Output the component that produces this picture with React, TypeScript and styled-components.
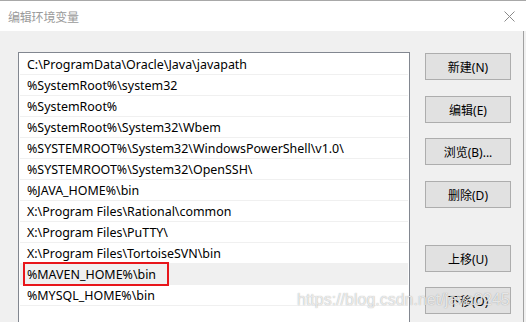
import React from "react";
import styled, { createGlobalStyle } from "styled-components";

const Global = createGlobalStyle`
  html, body { margin: 0; padding: 0; background: #f0f0f0; }
  body { font-family: "Noto Sans", "Noto Sans CJK SC", sans-serif; }
`;

const Window = styled.div`
  position: relative;
  width: 526px;
  height: 322px;
  overflow: hidden;
  display: flex;
  flex-direction: column;
  background: #f0f0f0;
  box-sizing: border-box;
  border-top: 1px solid #a8a8a8;
`;

const TitleBar = styled.div`
  height: 30px;
  background: #ffffff;
  display: flex;
  align-items: center;
  justify-content: space-between;
  padding: 0 11px 0 8px;
  flex-shrink: 0;
`;

const Title = styled.span`
  font-family: "Noto Sans CJK SC", sans-serif;
  font-size: 12px;
  color: #9a9a9a;
  letter-spacing: -0.2px;
`;

const Body = styled.div`
  flex: 1;
  display: flex;
  align-items: flex-start;
  padding: 21px 0 0 18px;
  width: 524px;
  box-sizing: border-box;
  border-right: 1px solid #a0a0a0;
`;

const List = styled.div`
  width: 392px;
  height: 290px;
  box-sizing: border-box;
  border: 1px solid #828790;
  background: #ffffff;
  padding: 1px 1px 0 1px;
  flex-shrink: 0;
`;

const Row = styled.div<{ $selected?: boolean }>`
  position: relative;
  height: 20px;
  border-bottom: 1px solid #f0f0f0;
  background: ${(p) => (p.$selected ? "#f0f0f0" : "transparent")};
  padding-left: 7px;
  display: flex;
  align-items: center;
  font-family: "Noto Sans", "Noto Sans CJK SC", sans-serif;
  font-size: 12.45px;
  color: #000;
  white-space: nowrap;
`;

const Highlight = styled.div`
  position: absolute;
  left: 3px;
  top: -2px;
  width: 146px;
  height: 24px;
  box-sizing: border-box;
  border: 2px solid #e8161b;
  pointer-events: none;
`;

const Buttons = styled.div`
  display: flex;
  flex-direction: column;
  margin-left: 15px;
`;

const Button = styled.button<{ $mt: number }>`
  width: 86px;
  height: 27px;
  margin-top: ${(p) => p.$mt}px;
  box-sizing: border-box;
  border: 1px solid #adadad;
  background: #e1e1e1;
  font-family: "Noto Sans", "Noto Sans CJK SC", sans-serif;
  font-size: 12px;
  color: #000;
  padding: 0;
  display: flex;
  align-items: center;
  justify-content: center;
`;

const Watermark = styled.div`
  position: absolute;
  left: 297px;
  top: 290px;
  font-family: "Liberation Sans", Arial, sans-serif;
  font-size: 16px;
  color: rgba(255, 255, 255, 0.75);
  text-shadow: 0 0 1px rgba(90, 90, 90, 0.6);
  pointer-events: none;
  white-space: nowrap;
`;

const CloseIcon = () => (
  <svg width="11" height="11" viewBox="0 0 11 11">
    <path d="M0.5 0.5 L10.5 10.5 M10.5 0.5 L0.5 10.5" stroke="#8a8a8a" strokeWidth="1" />
  </svg>
);

const paths = [
  "C:\\ProgramData\\Oracle\\Java\\javapath",
  "%SystemRoot%\\system32",
  "%SystemRoot%",
  "%SystemRoot%\\System32\\Wbem",
  "%SYSTEMROOT%\\System32\\WindowsPowerShell\\v1.0\\",
  "%SYSTEMROOT%\\System32\\OpenSSH\\",
  "%JAVA_HOME%\\bin",
  "X:\\Program Files\\Rational\\common",
  "X:\\Program Files\\PuTTY\\",
  "X:\\Program Files\\TortoiseSVN\\bin",
  "%MAVEN_HOME%\\bin",
  "%MYSQL_HOME%\\bin",
];

const buttons: { label: string; mt: number }[] = [
  { label: "新建(N)", mt: 1 },
  { label: "编辑(E)", mt: 16 },
  { label: "浏览(B)...", mt: 15 },
  { label: "删除(D)", mt: 16 },
  { label: "上移(U)", mt: 37 },
  { label: "下移(O)", mt: 15 },
];

export default function App() {
  return (
    <>
      <Global />
      <Window>
        <TitleBar>
          <Title>编辑环境变量</Title>
          <CloseIcon />
        </TitleBar>
        <Body>
          <List>
            {paths.map((p, i) => (
              <Row key={p} $selected={i === 10}>
                {p}
                {i === 10 && <Highlight />}
              </Row>
            ))}
          </List>
          <Buttons>
            {buttons.map((b) => (
              <Button key={b.label} $mt={b.mt}>
                {b.label}
              </Button>
            ))}
          </Buttons>
        </Body>
        <Watermark>https://blog.csdn.net/java0245</Watermark>
      </Window>
    </>
  );
}
